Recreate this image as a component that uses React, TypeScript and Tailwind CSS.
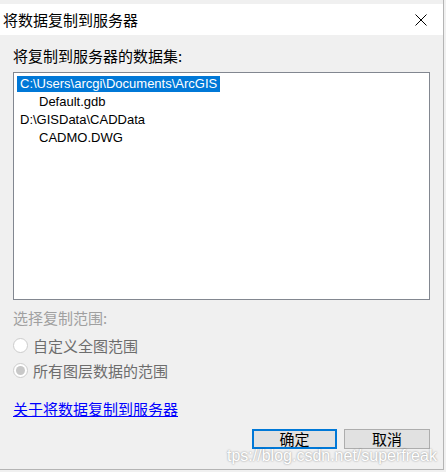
import React from "react";

const cjk = "font-['Microsoft_YaHei','Noto_Sans_CJK_SC',sans-serif]";
const latin = "font-['Segoe_UI','Liberation_Sans','Noto_Sans_CJK_SC',sans-serif]";

interface Item {
  label: string;
  indent?: boolean;
  selected?: boolean;
}

const items: Item[] = [
  { label: "C:\\Users\\arcgi\\Documents\\ArcGIS", selected: true },
  { label: "Default.gdb", indent: true },
  { label: "D:\\GISData\\CADData" },
  { label: "CADMO.DWG", indent: true },
];

function Radio({ checked, label }: { checked?: boolean; label: string }) {
  return (
    <div className="flex h-[25px] items-center gap-[5px]">
      <span className="flex h-[15px] w-[15px] items-center justify-center rounded-full border border-[#cccccc] bg-white">
        {checked && <span className="h-[9px] w-[9px] rounded-full bg-[#c8c8c8]" />}
      </span>
      <span className="text-[15px] leading-[20px] text-[#6d6d6d]">{label}</span>
    </div>
  );
}

export default function App() {
  return (
    <div className={`relative h-[472px] w-[446px] overflow-hidden bg-[#f0f0f0] ${cjk}`}>
      <div className="h-[470px] w-[444px] border-r border-b border-[#b4b4b4] pt-[4px]">
        {/* title bar */}
        <div className="flex h-[31px] items-center justify-between bg-white pl-[3px] pr-[16px]">
          <span className="text-[15px] leading-[20px] text-black">将数据复制到服务器</span>
          <svg width="12" height="12" viewBox="0 0 12 12">
            <path d="M0.5 0.5 L11.5 11.5 M11.5 0.5 L0.5 11.5" stroke="#000" strokeWidth="1" />
          </svg>
        </div>

        <div className="px-[13px]">
          <div className="mt-[11px] text-[15px] leading-[20px] text-black">将复制到服务器的数据集:</div>

          <div className="mt-[6px] h-[228px] border border-[#828790] bg-white pt-[2px] pl-[3px]">
            {items.map((it) => (
              <div key={it.label} className={`flex h-[18px] items-center ${it.indent ? "pl-[19px]" : ""}`}>
                <span
                  className={`h-[16px] px-[3px] text-[13px] leading-[16px] ${latin} ${
                    it.selected ? "bg-[#0078d7] text-white" : "text-black"
                  }`}
                >
                  {it.label}
                </span>
              </div>
            ))}
          </div>

          <div className="mt-[8px] text-[15px] leading-[20px] text-[#a0a0a0]">选择复制范围:</div>
          <div className="mt-[5px]">
            <Radio label="自定义全图范围" />
            <Radio checked label="所有图层数据的范围" />
          </div>

          <div className="mt-[16px] text-[15px] leading-[20px] text-[#0000ff] underline">关于将数据复制到服务器</div>

          <div className="mt-[10px] flex justify-end gap-[7px]">
            <button className="h-[20px] w-[85px] border-2 border-[#0078d7] bg-[#e1e1e1] text-[15px] leading-[16px] text-black">
              确定
            </button>
            <button className="h-[20px] w-[86px] border border-[#adadad] bg-[#e1e1e1] text-[15px] leading-[18px] text-black">
              取消
            </button>
          </div>
        </div>
      </div>

      {/* watermark */}
      <div className="absolute left-[227px] top-[446px] font-['Liberation_Sans',sans-serif] text-[16px] leading-[20px] text-white [text-shadow:0_0_2px_rgba(0,0,0,0.45)]">
        tps://blog.csdn.net/superfreak
      </div>
    </div>
  );
}
